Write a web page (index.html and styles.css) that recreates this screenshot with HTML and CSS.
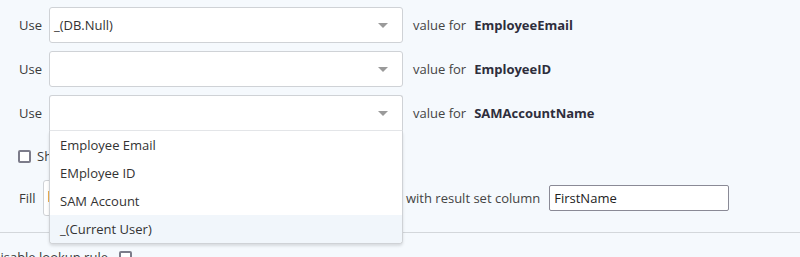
FILE: index.html
```html
<!DOCTYPE html>
<html>
<head>
<meta charset="utf-8">
<link rel="stylesheet" href="styles.css">
</head>
<body>
<div class="page">
  <div class="rows">
    <div class="row">
      <span class="use">Use</span>
      <div class="select"><span class="sel-text">_(DB.Null)</span><span class="arrow"></span></div>
      <span class="value-for">value for</span>
      <span class="field">EmployeeEmail</span>
    </div>
    <div class="row">
      <span class="use">Use</span>
      <div class="select"><span class="sel-text"></span><span class="arrow"></span></div>
      <span class="value-for">value for</span>
      <span class="field">EmployeeID</span>
    </div>
    <div class="row">
      <span class="use">Use</span>
      <div class="select open"><span class="sel-text"></span><span class="arrow"></span>
        <ul class="menu">
          <li class="item">Employee Email</li>
          <li class="item">EMployee ID</li>
          <li class="item">SAM Account</li>
          <li class="item active">_(Current User)</li>
        </ul>
      </div>
      <span class="value-for">value for</span>
      <span class="field">SAMAccountName</span>
    </div>
  </div>
  <div class="check-row">
    <span class="checkbox"></span>
    <span class="check-label">Show all values</span>
  </div>
  <div class="fill-row">
    <span class="fill">Fill</span>
    <div class="fill-box"><span class="tag"></span></div>
    <span class="with">with result set column</span>
    <div class="input">FirstName</div>
  </div>
</div>
<div class="divider"></div>
<div class="bottom-row">
  <span class="disable">Disable lookup rule</span>
  <span class="checkbox"></span>
</div>
</body>
</html>
```
FILE: styles.css
```css
html, body {
  margin: 0;
  padding: 0;
  background: #f5f9fd;
  font-family: "Open Sans", "Noto Sans", sans-serif;
  font-size: 13px;
  color: #3a3a3a;
  overflow: hidden;
  height: 257px;
}
.page {
  padding: 7px 0 0 19px;
}
.rows {
  display: flex;
  flex-direction: column;
  gap: 8px;
}
.row {
  display: flex;
  align-items: center;
  height: 36px;
}
.use {
  width: 30px;
}
.select {
  position: relative;
  box-sizing: border-box;
  width: 354px;
  height: 36px;
  background: #fff;
  border: 1px solid #cfd2d6;
  border-radius: 3px;
  display: flex;
  align-items: center;
  padding-left: 4px;
}
.sel-text {
  flex: 1;
  color: #333;
}
.arrow {
  width: 0;
  height: 0;
  border-left: 5px solid transparent;
  border-right: 5px solid transparent;
  border-top: 5px solid #9a9a9a;
  margin-right: 14px;
}
.select.open {
  border-radius: 3px 3px 0 0;
  border-bottom-color: #e4e6e9;
}
.menu {
  position: absolute;
  top: 35px;
  left: -1px;
  right: -1px;
  margin: 0;
  padding: 0;
  list-style: none;
  background: #fff;
  border: 1px solid #cfd2d6;
  border-top: none;
  border-radius: 0 0 4px 4px;
  box-shadow: 0 2px 3px rgba(0, 0, 0, 0.12);
  z-index: 5;
  overflow: hidden;
}
.item {
  height: 28px;
  line-height: 28px;
  padding-left: 10px;
  color: #333;
}
.item.active {
  background: #f1f6fb;
}
.value-for {
  margin-left: 10px;
  color: #444;
}
.field {
  margin-left: 8px;
  font-weight: 700;
  color: #2e2e3c;
}
.check-row {
  display: flex;
  align-items: center;
  height: 24px;
  margin-top: 13px;
}
.checkbox {
  box-sizing: border-box;
  width: 13px;
  height: 13px;
  border: 2px solid #7c7c8a;
  border-radius: 2px;
  background: #fff;
}
.check-row .checkbox {
  margin-left: -1px;
}
.check-label {
  margin-left: 6px;
}
.fill-row {
  display: flex;
  align-items: center;
  height: 36px;
  margin-top: 12px;
}
.fill {
  width: 24px;
}
.fill-box {
  box-sizing: border-box;
  width: 355px;
  height: 36px;
  background: #fff;
  border: 1px solid #cfd2d6;
  border-radius: 3px;
  display: flex;
  align-items: center;
  padding-left: 4px;
}
.tag {
  width: 2px;
  height: 11px;
  background: #f0b050;
  margin-top: -4px;
}
.with {
  margin-left: 8px;
  color: #444;
}
.input {
  box-sizing: border-box;
  width: 180px;
  height: 26px;
  margin-left: 9px;
  background: #fff;
  border: 1px solid #8a8a96;
  border-radius: 2px;
  padding-left: 4px;
  line-height: 24px;
  color: #222;
}
.divider {
  height: 1px;
  background: #d3d7db;
  margin-top: 16px;
}
.bottom-row {
  display: flex;
  align-items: center;
  height: 24px;
  margin-top: 12px;
  margin-left: -9px;
}
.bottom-row .checkbox {
  margin-left: 11px;
}
```
